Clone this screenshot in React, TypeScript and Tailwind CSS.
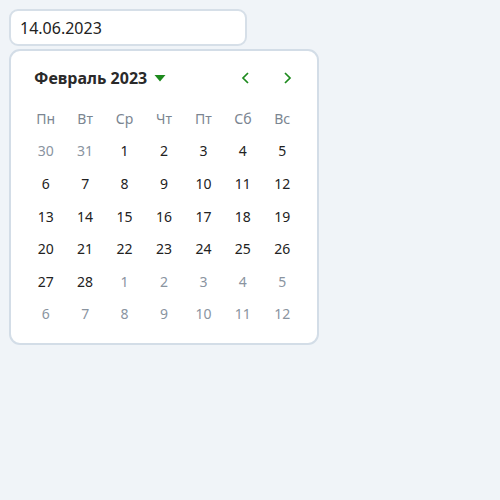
import React from "react";

const weekdays = ["Пн", "Вт", "Ср", "Чт", "Пт", "Сб", "Вс"];
const days: { d: number; cur: boolean }[] = [];
[30, 31].forEach((d) => days.push({ d, cur: false }));
for (let i = 1; i <= 28; i++) days.push({ d: i, cur: true });
[1, 2, 3, 4, 5, 6, 7, 8, 9, 10, 11, 12].forEach((d) => days.push({ d, cur: false }));

export default function App() {
  return (
    <div
      className="w-[500px] h-[500px] bg-[#f0f4f8] pt-[9px] pl-[9px]"
      style={{ fontFamily: '"Noto Sans", "Open Sans", sans-serif' }}
    >
      <div className="w-[238px] h-[37px] bg-white border-2 border-[#d6dfe8] rounded-[9px] flex items-center pl-[9px] text-[16px] text-[#222]">
        14.06.2023
      </div>
      <div className="mt-[3px] w-[310px] bg-white border-2 border-[#d3dde7] rounded-[11px] px-[15px] pt-[14px] pb-[13px]">
        <div className="flex items-center h-[26px] pl-[8px]">
          <span className="font-bold text-[16px] text-[#2a2a2a]">Февраль 2023</span>
          <svg width="12" height="8" viewBox="0 0 12 8" className="ml-[7px]">
            <polygon points="0.5,1 11.5,1 6,7.5" fill="#1d8a1d" />
          </svg>
          <div className="ml-auto flex items-center gap-[27px] mr-[8px]">
            <svg width="14" height="14" viewBox="0 0 14 14">
              <polyline points="9,2 4,7 9,12" fill="none" stroke="#1d8a1d" strokeWidth="1.7" />
            </svg>
            <svg width="14" height="14" viewBox="0 0 14 14">
              <polyline points="5,2 10,7 5,12" fill="none" stroke="#1d8a1d" strokeWidth="1.7" />
            </svg>
          </div>
        </div>
        <div className="grid grid-cols-7 mt-[11px]">
          {weekdays.map((w) => (
            <div key={w} className="h-[32.6px] flex items-center justify-center text-[14px] text-[#7b8591]">
              {w}
            </div>
          ))}
          {days.map((x, i) => (
            <div
              key={i}
              className={
                "h-[32.6px] flex items-center justify-center text-[14px] " +
                (x.cur ? "text-[#222]" : "text-[#8a949f]")
              }
            >
              {x.d}
            </div>
          ))}
        </div>
      </div>
    </div>
  );
}
